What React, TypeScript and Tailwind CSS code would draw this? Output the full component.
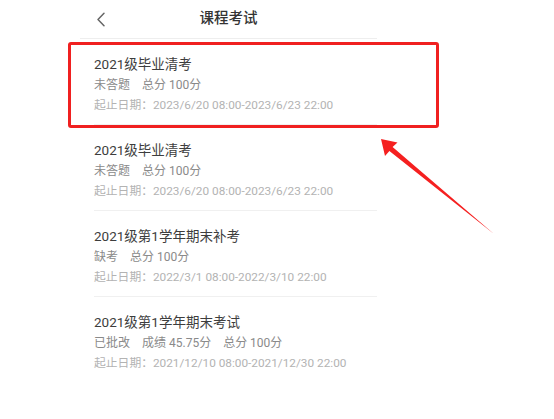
import React from "react";

type Exam = {
  title: string;
  status: string;
  extra?: string;
  total: string;
  date: string;
};

const exams: Exam[] = [
  { title: "2021级毕业清考", status: "未答题", total: "总分 100分", date: "起止日期：2023/6/20 08:00-2023/6/23 22:00" },
  { title: "2021级毕业清考", status: "未答题", total: "总分 100分", date: "起止日期：2023/6/20 08:00-2023/6/23 22:00" },
  { title: "2021级第1学年期末补考", status: "缺考", total: "总分 100分", date: "起止日期：2022/3/1 08:00-2022/3/10 22:00" },
  { title: "2021级第1学年期末考试", status: "已批改", extra: "成绩 45.75分", total: "总分 100分", date: "起止日期：2021/12/10 08:00-2021/12/30 22:00" },
];

const font = { fontFamily: "Roboto, 'Noto Sans CJK SC', sans-serif" };

export default function App() {
  return (
    <div className="relative w-[554px] h-[419px] bg-white overflow-hidden" style={font}>
      <div className="ml-[80px] w-[297px] flex flex-col">
        <div className="relative h-[39px] border-b border-[#eeeeee] flex items-center justify-center">
          <svg className="absolute left-[16px] top-[12px]" width="10" height="15" viewBox="0 0 10 15">
            <path d="M8 1.2 L2 7.5 L8 13.8" fill="none" stroke="#666" strokeWidth="1.5" strokeLinecap="round" strokeLinejoin="round" />
          </svg>
          <span className="text-[14.5px] font-medium text-[#333] leading-none">课程考试</span>
        </div>
        {exams.map((e, i) => (
          <div key={i} className={"ml-[14px] pt-[15px] pb-[9px] " + (i < exams.length - 1 ? "border-b border-[#f0f0f0]" : "")}>
            <div className="h-[20px] leading-[20px] text-[13.5px] text-[#3d3d3d]">{e.title}</div>
            <div className="mt-[1px] h-[20px] leading-[20px] text-[12px] text-[#8a8a8a] flex gap-[12px]">
              <span>{e.status}</span>
              {e.extra && <span>{e.extra}</span>}
              <span>{e.total}</span>
            </div>
            <div className="h-[20px] leading-[20px] text-[11.8px] text-[#b3b3b3]">{e.date}</div>
          </div>
        ))}
      </div>

      <div className="absolute left-[68px] top-[42px] w-[371px] h-[86px] border-[3px] border-[#f02020] rounded-[3px] pointer-events-none" />

      <svg className="absolute left-0 top-0 pointer-events-none" width="554" height="419" viewBox="0 0 554 419">
        <polygon
          points="381,139 397.5,142.5 392.6,147.1 494,234 389.4,150.9 385,156"
          fill="#f52020"
        />
      </svg>
    </div>
  );
}
